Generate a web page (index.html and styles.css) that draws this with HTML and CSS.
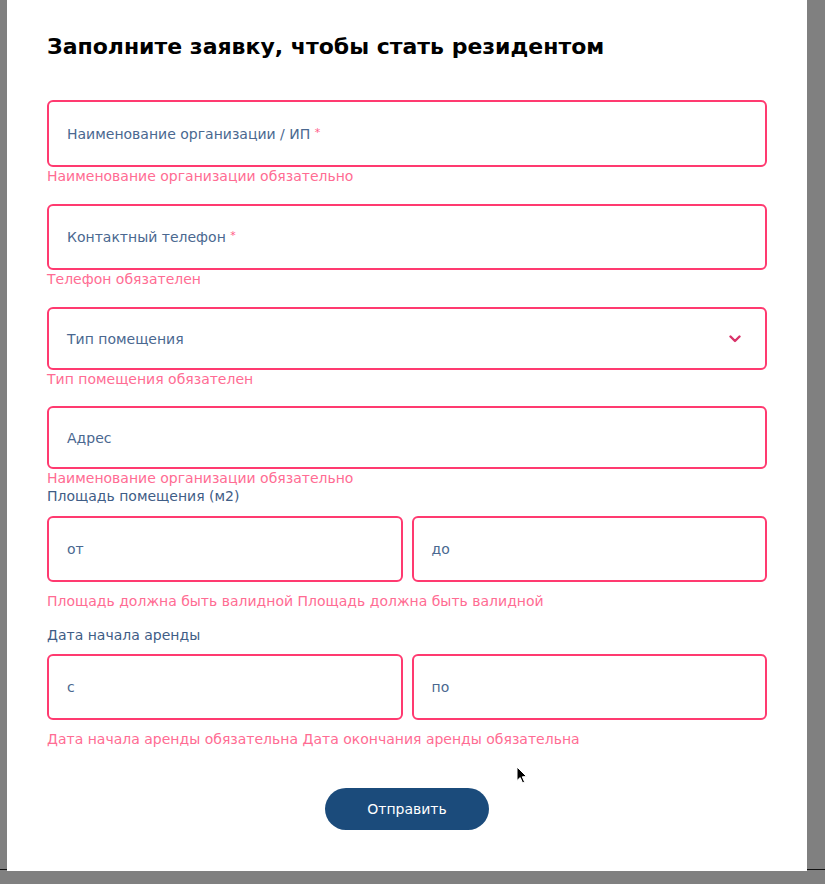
FILE: index.html
```html
<!DOCTYPE html>
<html lang="ru">
<head>
<meta charset="utf-8">
<title>Заявка</title>
<link rel="stylesheet" href="styles.css">
</head>
<body>
<div class="backdrop-line"></div>
<div class="modal">
  <h1 class="title">Заполните заявку, чтобы стать резидентом</h1>
  <form class="form">
    <div class="field field-first">
      <div class="box box-first"><span class="ph">Наименование организации / ИП <span class="req">*</span></span></div>
      <div class="err">Наименование организации обязательно</div>
    </div>
    <div class="field field-phone">
      <div class="box box-tall"><span class="ph">Контактный телефон <span class="req">*</span></span></div>
      <div class="err">Телефон обязателен</div>
    </div>
    <div class="field field-select">
      <div class="box box-select"><span class="ph">Тип помещения</span>
        <svg class="chev" width="12" height="8" viewBox="0 0 12 8"><path d="M1.5 1.5 L6 6 L10.5 1.5" fill="none" stroke="#d9336a" stroke-width="2.4" stroke-linecap="round" stroke-linejoin="round"/></svg>
      </div>
      <div class="err">Тип помещения обязателен</div>
    </div>
    <div class="field field-address">
      <div class="box box-short"><span class="ph">Адрес</span></div>
      <div class="err">Наименование организации обязательно</div>
    </div>
    <div class="label">Площадь помещения (м2)</div>
    <div class="pair">
      <div class="box box-tall"><span class="ph">от</span></div>
      <div class="box box-tall"><span class="ph">до</span></div>
    </div>
    <div class="err err-pair">Площадь должна быть валидной Площадь должна быть валидной</div>
    <div class="label label-date">Дата начала аренды</div>
    <div class="pair pair-date">
      <div class="box box-tall"><span class="ph">с</span></div>
      <div class="box box-tall"><span class="ph">по</span></div>
    </div>
    <div class="err err-pair">Дата начала аренды обязательна Дата окончания аренды обязательна</div>
    <div class="actions">
      <button type="button" class="submit">Отправить</button>
    </div>
  </form>
</div>
<svg class="cursor" width="12" height="19" viewBox="0 0 12 19"><path d="M1 1 L1 14.5 L4.2 11.6 L6.6 17 L8.6 16.1 L6.3 10.8 L10.6 10.6 Z" fill="#000" stroke="#fff" stroke-width="1"/></svg>
</body>
</html>
```
FILE: styles.css
```css
html, body {
  margin: 0;
  padding: 0;
}
body {
  background: #808080;
  width: 825px;
  height: 884px;
  overflow: hidden;
  position: relative;
  font-family: "DejaVu Sans", "Noto Sans", sans-serif;
}
.backdrop-line {
  position: absolute;
  left: 0;
  right: 0;
  top: 869px;
  height: 1px;
  background: #111;
}
.modal {
  position: relative;
  margin-left: 7px;
  width: 720px;
  height: 871px;
  padding: 0 40px;
  background: #fff;
  box-sizing: content-box;
  overflow: hidden;
}
.title {
  margin: 0;
  padding-top: 32px;
  font-size: 22px;
  line-height: 30px;
  font-weight: bold;
  color: #000;
}
.form {
  display: flex;
  flex-direction: column;
}
.field-first { margin-top: 38px; }
.field-phone { margin-top: 19px; }
.field-select { margin-top: 19px; }
.field-address { margin-top: 18px; }
.box {
  border: 2px solid #ff3a70;
  border-radius: 6px;
  display: flex;
  align-items: center;
  padding: 0 18px;
  box-sizing: border-box;
  position: relative;
}
.box-first { height: 67px; }
.box-tall { height: 66px; }
.box-select { height: 63px; justify-content: space-between; padding-right: 24px; }
.box-short { height: 63px; }
.ph {
  font-size: 14px;
  color: #4a6890;
}
.req {
  color: #ff5a86;
  font-size: 11px;
  vertical-align: 3px;
}
.chev {
  display: block;
}
.err {
  font-size: 14px;
  line-height: 18px;
  color: #ff6c93;
}
.label {
  font-size: 14px;
  line-height: 18px;
  color: #3f5d86;
}
.pair {
  display: grid;
  grid-template-columns: 1fr 1fr;
  gap: 9px;
  margin-top: 11px;
}
.pair-date {
  margin-top: 10px;
}
.err-pair {
  margin-top: 10px;
}
.label-date {
  margin-top: 16px;
}
.actions {
  display: flex;
  justify-content: center;
  margin-top: 40px;
}
.submit {
  width: 164px;
  height: 42px;
  border: none;
  border-radius: 21px;
  background: #1b4b7b;
  color: #fff;
  font-family: "DejaVu Sans", "Noto Sans", sans-serif;
  font-size: 14px;
  padding: 0;
}
.cursor {
  position: absolute;
  left: 516px;
  top: 766px;
}
```
